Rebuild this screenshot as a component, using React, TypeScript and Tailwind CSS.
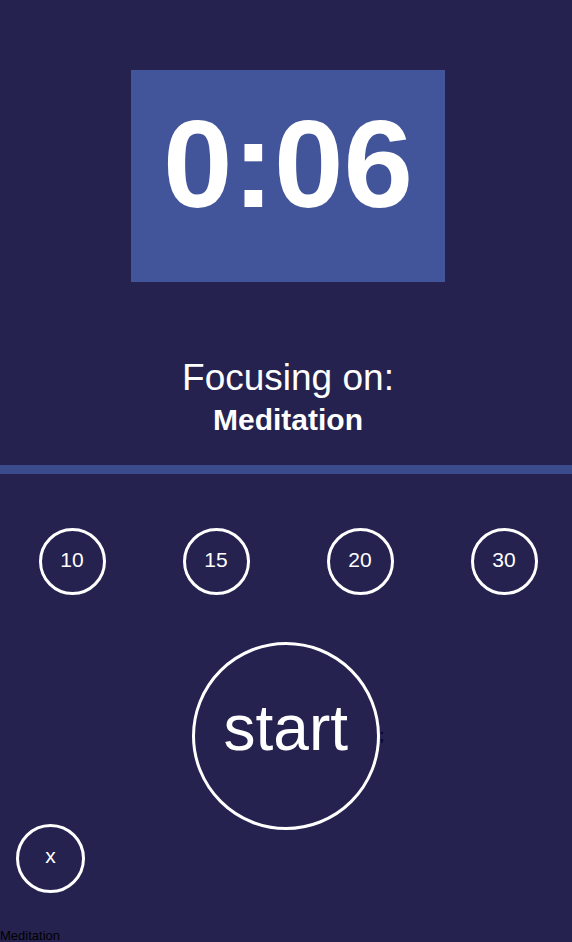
import React from "react";

const font = { fontFamily: '"Liberation Sans", Arial, sans-serif' };

function Chip({ label }: { label: string }) {
  return (
    <div className="flex h-[67px] w-[67px] items-center justify-center rounded-full border-[3px] border-white pb-[3px] text-[21px] text-white">
      {label}
    </div>
  );
}

export default function App() {
  return (
    <div className="w-full overflow-hidden bg-[#25224f]" style={font}>
      <div className="flex w-[576px] flex-col">
        <div className="flex justify-center pt-[70px]">
          <div className="h-[212px] w-[314px] bg-[#42549a] pt-[31px] text-center text-[125px] font-bold leading-none text-white">
            0:06
          </div>
        </div>
        <div className="mt-[77px] text-center text-[37px] leading-none text-white">Focusing on:</div>
        <div className="mt-[9px] text-center text-[30px] font-bold leading-none text-white">Meditation</div>
        <div className="mt-[30px] h-[9px] w-full bg-[#3c4b8c]" />
        <div className="mt-[54px] grid grid-cols-4 justify-items-center">
          <Chip label="10" />
          <Chip label="15" />
          <Chip label="20" />
          <Chip label="30" />
        </div>
        <div className="mt-[47px] flex items-center justify-center">
          <div className="flex h-[188px] w-[188px] items-center justify-center rounded-full border-[3px] border-white pb-[17px] text-[64px] text-white">
            start
          </div>
          <span className="text-[16px] text-black">;</span>
        </div>
        <div className="-mt-[6px] ml-[16px] flex h-[69px] w-[69px] items-center justify-center rounded-full border-[3px] border-white pb-[5px] text-[21px] text-white">
          x
        </div>
        <div className="mt-[36px] text-[13px] leading-none text-black">Meditation</div>
      </div>
    </div>
  );
}
